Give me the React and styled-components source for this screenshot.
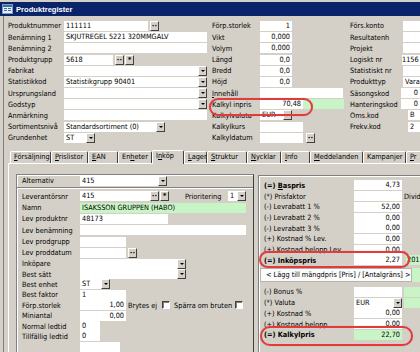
import React from 'react';
import styled, { createGlobalStyle } from 'styled-components';

const FACE = '#d4d0c8';
const GREEN = '#c9f5c6';

const GlobalStyle = createGlobalStyle`
  html, body { margin: 0; padding: 0; background: ${FACE}; }
  body {
    font-family: "DejaVu Sans Condensed", "Liberation Sans", sans-serif;
    font-size: 7.3px;
    color: #000;
  }
`;

const Window = styled.div`
  position: relative;
  width: 420px;
  height: 352px;
  overflow: hidden;
  display: flex;
  flex-direction: column;
  background: ${FACE};
`;

const TitleBar = styled.div`
  margin-top: 2px;
  height: 14px;
  display: flex;
  align-items: center;
  gap: 3px;
  padding-left: 2px;
  background: #0a246a;
  color: #fff;
  font: bold 7.6px "Liberation Sans", sans-serif;
`;

const Body = styled.div`
  flex: 1;
  min-height: 0;
  margin-left: 3px;
  border-left: 1px solid #808080;
  display: flex;
  flex-direction: column;
`;

const TopForm = styled.div`
  display: flex;
  padding: 4.4px 0 0 4px;
`;

const Column = styled.div`
  width: ${(p) => p.$w}px;
  flex-shrink: 0;
  display: flex;
  flex-direction: column;
`;

const Row = styled.div`
  display: flex;
  align-items: center;
  height: ${(p) => p.$h || 11.2}px;
  white-space: nowrap;
`;

const Label = styled.span`
  width: ${(p) => p.$w}px;
  flex-shrink: 0;
  font-weight: ${(p) => (p.$bold ? 'bold' : 'normal')};
  margin-left: ${(p) => p.$ml || 0}px;
`;

const Text = styled.span`
  margin-left: ${(p) => p.$ml || 0}px;
  flex-shrink: 0;
`;

const Field = styled.div`
  flex-shrink: 0;
  width: ${(p) => p.$w}px;
  height: 10px;
  line-height: 10px;
  box-sizing: border-box;
  padding: 0 ${(p) => (p.$tight ? 0 : 2)}px;
  margin-left: ${(p) => p.$ml || 0}px;
  background: ${(p) => (p.$green ? GREEN : '#fff')};
  text-align: ${(p) => (p.$right ? 'right' : 'left')};
  overflow: hidden;
  white-space: nowrap;
`;

const ComboBox = styled.div`
  flex-shrink: 0;
  display: flex;
  width: ${(p) => p.$w}px;
  height: 10px;
  margin-left: ${(p) => p.$ml || 0}px;
  background: #fff;
`;

const ComboText = styled.span`
  flex: 1;
  padding: 0 2px;
  line-height: 10px;
  overflow: hidden;
`;

const DropButton = styled.span`
  width: 9px;
  height: 10px;
  box-sizing: border-box;
  background: ${FACE};
  border: 1px solid;
  border-color: #fff #404040 #404040 #fff;
  display: flex;
  align-items: center;
  justify-content: center;
  &::after {
    content: '';
    border-left: 2px solid transparent;
    border-right: 2px solid transparent;
    border-top: 2px solid #000;
  }
`;

const ToolButton = styled.span`
  flex-shrink: 0;
  width: 9px;
  height: 10px;
  box-sizing: border-box;
  margin-left: ${(p) => p.$ml || 0}px;
  background: ${FACE};
  border: 1px solid;
  border-color: #fff #404040 #404040 #fff;
  display: flex;
  align-items: center;
  justify-content: center;
  font: bold 7px "DejaVu Sans", sans-serif;
  line-height: 6px;
`;

const CheckBox = styled.span`
  flex-shrink: 0;
  width: 8px;
  height: 8px;
  margin-left: ${(p) => p.$ml || 0}px;
  box-sizing: border-box;
  background: #fff;
  border: 1px solid;
  border-color: #404040 #fff #fff #404040;
  box-shadow: inset 1px 1px #808080;
`;

const TabStrip = styled.div`
  margin-top: 6.4px;
  height: 13px;
  padding-left: 6px;
  display: flex;
  align-items: flex-end;
`;

const Tab = styled.div`
  flex-shrink: 0;
  position: relative;
  width: ${(p) => p.$w}px;
  height: ${(p) => (p.$active ? 14 : 12)}px;
  margin-bottom: ${(p) => (p.$active ? -1 : 0)}px;
  z-index: ${(p) => (p.$active ? 1 : 0)};
  box-sizing: border-box;
  padding-left: 3px;
  border: 1px solid;
  border-color: #fff #404040 transparent #fff;
  border-bottom: none;
  border-radius: 2px 2px 0 0;
  background: ${FACE};
  line-height: 10px;
  white-space: nowrap;
  overflow: hidden;
`;

const TabPanel = styled.div`
  flex: 1;
  min-height: 0;
  margin-left: 4px;
  border-top: 1px solid #fff;
  border-left: 1px solid #fff;
  padding: 10px 0 0 7px;
  display: flex;
`;

const LeftBlock = styled.div`
  width: 238px;
  flex-shrink: 0;
  box-sizing: border-box;
  border-top: 1px solid #808080;
  border-left: 1px solid #808080;
  border-right: 1px solid #404040;
  box-shadow: inset 1px 1px #fff;
  display: flex;
  flex-direction: column;
`;

const AltSection = styled.div`
  height: 20px;
  padding-left: 5px;
  display: flex;
  align-items: center;
`;

const Divider = styled.div`
  border-top: 1px solid #808080;
  border-bottom: 1px solid #fff;
`;

const LevSection = styled.div`
  padding: 2px 0 0 5px;
  display: flex;
  flex-direction: column;
`;

const RightBlock = styled.div`
  flex: 1;
  margin: 1px 0 0 4px;
  border-top: 1px solid #808080;
  border-left: 1px solid #808080;
  box-shadow: inset 1px 1px #fff;
  padding: 4.3px 0 0 5px;
  display: flex;
  flex-direction: column;
`;

const PriceBand = styled.div`
  display: flex;
  align-items: center;
  margin: 2px 0 5px -4px;
  height: 14px;
`;

const BandText = styled.div`
  width: 152px;
  height: 14px;
  box-sizing: border-box;
  border: 1px solid #b8b4ac;
  background: #fbfbfb;
  padding-left: 5px;
  line-height: 12px;
  white-space: nowrap;
`;

const GreenCell = styled.div`
  flex-shrink: 0;
  width: ${(p) => p.$w}px;
  height: ${(p) => p.$h || 10}px;
  margin-left: ${(p) => p.$ml || 0}px;
  background: ${GREEN};
  line-height: 10px;
  padding-left: 1px;
  overflow: hidden;
`;

const Highlight = styled.div`
  position: absolute;
  left: ${(p) => p.$x}px;
  top: ${(p) => p.$y}px;
  width: ${(p) => p.$w}px;
  height: ${(p) => p.$h}px;
  box-sizing: border-box;
  border: 2px solid #e23b3b;
  border-radius: 10px;
  box-shadow: 0 0 1px rgba(120, 0, 0, 0.4);
  pointer-events: none;
`;

const Combo = ({ w, ml, children }) => (
  <ComboBox $w={w} $ml={ml}>
    <ComboText>{children}</ComboText>
    <DropButton />
  </ComboBox>
);

const Dots = ({ ml }) => <ToolButton $ml={ml}>··</ToolButton>;
const Star = ({ ml }) => <ToolButton $ml={ml}>*</ToolButton>;

const AppIcon = () => (
  <svg width="11" height="10" viewBox="0 0 11 10">
    <rect x="0.5" y="0.5" width="10" height="9" fill="#e8eef8" stroke="#7f9db9" />
    <rect x="1" y="1" width="9" height="2" fill="#3a6ea5" />
    <rect x="2" y="4" width="3" height="1" fill="#3a6ea5" />
    <rect x="6" y="4" width="3" height="1" fill="#3a6ea5" />
    <rect x="2" y="6" width="3" height="1" fill="#3a6ea5" />
    <rect x="6" y="6" width="3" height="1" fill="#3a6ea5" />
  </svg>
);

const tabs = [
  { label: 'Försäljning', u: 0, w: 41 },
  { label: 'Prislistor', u: 0, w: 37 },
  { label: 'EAN', u: 0, w: 30 },
  { label: 'Enheter', u: 2, w: 34 },
  { label: 'Inköp', u: 1, w: 32, active: true },
  { label: 'Lager', u: 0, w: 23 },
  { label: 'Struktur', u: 0, w: 40 },
  { label: 'Nycklar', u: 0, w: 34 },
  { label: 'Info', u: 0, w: 29 },
  { label: 'Meddelanden', u: 0, w: 53 },
  { label: 'Kampanjer', u: -1, w: 43 },
  { label: 'Pr', u: 0, w: 20 },
];

const Underlined = ({ text, at }) =>
  at < 0 ? (
    text
  ) : (
    <>
      {text.slice(0, at)}
      <u>{text[at]}</u>
      {text.slice(at + 1)}
    </>
  );

const App = () => (
  <Window>
    <GlobalStyle />
    <TitleBar>
      <AppIcon />
      Produktregister
    </TitleBar>
    <Body>
      <TopForm>
        <Column $w={204}>
          <Row>
            <Label $w={56}>Produktnummer</Label>
            <Field $w={84}>111111</Field>
            <Dots ml={2} />
          </Row>
          <Row>
            <Label $w={56}>Benämning 1</Label>
            <Field $w={143}>SKJUTREGEL 5221 320MMGALV</Field>
          </Row>
          <Row>
            <Label $w={56}>Benämning 2</Label>
            <Field $w={143} />
          </Row>
          <Row>
            <Label $w={56}>Produktgrupp</Label>
            <Field $w={49}>5618</Field>
            <Dots ml={2} />
            <Star ml={1} />
          </Row>
          <Row>
            <Label $w={56}>Fabrikat</Label>
            <Combo w={143} />
          </Row>
          <Row>
            <Label $w={56}>Statistikkod</Label>
            <Combo w={143}>Statistikgrupp 90401</Combo>
          </Row>
          <Row>
            <Label $w={56}>Ursprungsland</Label>
            <Combo w={143} />
          </Row>
          <Row>
            <Label $w={56}>Godstyp</Label>
            <Combo w={143} />
          </Row>
          <Row>
            <Label $w={56}>Anmärkning</Label>
            <Field $w={143} />
          </Row>
          <Row>
            <Label $w={56}>Sortimentsnivå</Label>
            <Combo w={101}>Standardsortiment (0)</Combo>
          </Row>
          <Row>
            <Label $w={56}>Grundenhet</Label>
            <Combo w={31}>ST</Combo>
          </Row>
        </Column>

        <Column $w={138}>
          <Row>
            <Label $w={48}>Förp.storlek</Label>
            <Field $w={32} $right>1</Field>
          </Row>
          <Row>
            <Label $w={48}>Vikt</Label>
            <Field $w={32} $right>0,000</Field>
          </Row>
          <Row>
            <Label $w={48}>Volym</Label>
            <Field $w={32} $right>0,000</Field>
          </Row>
          <Row>
            <Label $w={48}>Längd</Label>
            <Field $w={32} $right>0,0</Field>
          </Row>
          <Row>
            <Label $w={48}>Bredd</Label>
            <Field $w={32} $right>0,0</Field>
          </Row>
          <Row>
            <Label $w={48}>Höjd</Label>
            <Field $w={32} $right>0,0</Field>
          </Row>
          <Row>
            <Label $w={48}>
              <u>I</u>nnehåll
            </Label>
            <Field $w={83} />
          </Row>
          <Row>
            <Label $w={48}>Kalkyl inpris</Label>
            <Field $w={43} $right>70,48</Field>
            <GreenCell $w={40} />
          </Row>
          <Row>
            <Label $w={48}>Kalkylvaluta</Label>
            <Combo w={32}>EUR</Combo>
          </Row>
          <Row>
            <Label $w={48}>Kalkylkurs</Label>
            <Field $w={43} />
          </Row>
          <Row>
            <Label $w={48}>Kalkyldatum</Label>
            <Field $w={43} />
            <Dots ml={3} />
          </Row>
        </Column>

        <Column $w={74}>
          <Row>
            <Label $w={53}>Förs.konto</Label>
            <Field $w={20} />
          </Row>
          <Row>
            <Label $w={53}>Resultatenh</Label>
            <Field $w={20} />
          </Row>
          <Row>
            <Label $w={53}>Projekt</Label>
            <Field $w={20} />
          </Row>
          <Row>
            <Label $w={52}>Logiskt nr</Label>
            <Field $w={18} $tight>1156</Field>
          </Row>
          <Row>
            <Label $w={53}>Statistiskt nr</Label>
            <Field $w={20} />
          </Row>
          <Row>
            <Label $w={53}>Produkttyp</Label>
            <Field $w={20}>Vara</Field>
          </Row>
          <Row>
            <Label $w={51}>Säsongskod</Label>
            <Field $w={19} $right>0</Field>
          </Row>
          <Row>
            <Label $w={51}>Hanteringskod</Label>
            <Field $w={19} $right>0</Field>
          </Row>
          <Row>
            <Label $w={58}>Oms.kod</Label>
            <Field $w={12}>B</Field>
          </Row>
          <Row>
            <Label $w={58}>Frekv.kod</Label>
            <Field $w={12}>2</Field>
          </Row>
        </Column>
      </TopForm>

      <TabStrip>
        {tabs.map((t) => (
          <Tab key={t.label} $w={t.w} $active={t.active}>
            <Underlined text={t.label} at={t.u} />
          </Tab>
        ))}
      </TabStrip>

      <TabPanel>
        <LeftBlock>
          <AltSection>
            <Label $w={58}>Alternativ</Label>
            <Combo w={87}>415</Combo>
          </AltSection>
          <Divider />
          <LevSection>
            <Row $h={11.3}>
              <Label $w={58}>Leverantörsnr</Label>
              <Field $w={70}>415</Field>
              <Dots ml={0} />
              <Star ml={1} />
              <Label $w={43} $ml={16}>Prioritering</Label>
              <Combo w={18}>1</Combo>
            </Row>
            <Row $h={11.3}>
              <Label $w={58}>Namn</Label>
              <Field $w={166} $green>ISAKSSON GRUPPEN (HABO)</Field>
            </Row>
            <Row $h={11.3}>
              <Label $w={58}>Lev produktnr</Label>
              <Field $w={88}>48173</Field>
            </Row>
            <Row $h={11.3}>
              <Label $w={58}>Lev benämning</Label>
              <Field $w={166} />
            </Row>
            <Row $h={11.3}>
              <Label $w={58}>Lev prodgrupp</Label>
              <Field $w={46} />
            </Row>
            <Row $h={11.3}>
              <Label $w={58}>Lev proddatum</Label>
              <Field $w={46} />
              <Dots ml={2} />
            </Row>
            <Row $h={10.4}>
              <Label $w={58}>Inköpare</Label>
              <Combo w={106} />
            </Row>
            <Row $h={10.4}>
              <Label $w={58}>Best sätt</Label>
              <Combo w={106} />
            </Row>
            <Row $h={10.4}>
              <Label $w={58}>Best enhet</Label>
              <Combo w={30}>ST</Combo>
            </Row>
            <Row $h={10.4}>
              <Label $w={58}>Best faktor</Label>
              <Field $w={46}>1</Field>
            </Row>
            <Row $h={10.4}>
              <Label $w={58}>Förp.storlek</Label>
              <Field $w={46} $right>1,00</Field>
              <Text $ml={2}>Brytes ej</Text>
              <CheckBox $ml={5} />
              <Text $ml={4}>Spärra om bruten</Text>
              <CheckBox $ml={3} />
            </Row>
            <Row $h={10.4}>
              <Label $w={58}>Miniantal</Label>
              <Field $w={46} $right>0,00</Field>
            </Row>
            <Row $h={10.4}>
              <Label $w={58}>Normal ledtid</Label>
              <Field $w={20}>0</Field>
            </Row>
            <Row $h={10.4}>
              <Label $w={58}>Tillfällig ledtid</Label>
              <Field $w={20}>0</Field>
            </Row>
            <Row $h={10.4}>
              <Label $w={58} />
              <Field $w={40} />
            </Row>
          </LevSection>
        </LeftBlock>

        <RightBlock>
          <Row $h={10.7}>
            <Label $w={90} $bold>
              (=) <u>B</u>aspris
            </Label>
            <Field $w={48} $right>4,73</Field>
          </Row>
          <Row $h={10.7}>
            <Label $w={90}>(*) Prisfaktor</Label>
            <Field $w={48} />
            <Text $ml={2}>Divid</Text>
          </Row>
          <Row $h={10.7}>
            <Label $w={90}>(-) Levrabatt 1 %</Label>
            <Field $w={48} $right>52,00</Field>
          </Row>
          <Row $h={10.7}>
            <Label $w={90}>(-) Levrabatt 2 %</Label>
            <Field $w={48} $right>0,00</Field>
          </Row>
          <Row $h={10.7}>
            <Label $w={90}>(-) Levrabatt 3 %</Label>
            <Field $w={48} $right>0,00</Field>
          </Row>
          <Row $h={10.7}>
            <Label $w={90}>(+) Kostnad % Lev.</Label>
            <Field $w={48} $right>0,00</Field>
          </Row>
          <Row $h={10.7}>
            <Label $w={90}>(+) Kostnad belopp Lev.</Label>
            <Field $w={48} $right>0,00</Field>
          </Row>
          <Row $h={10.7}>
            <Label $w={90} $bold>(=) Inköpspris</Label>
            <Field $w={48} $right>2,27</Field>
            <GreenCell $w={14} $ml={4}>201</GreenCell>
          </Row>
          <PriceBand>
            <BandText>&lt; Lägg till mängdpris [Pris] / [Antalgräns] &gt;</BandText>
            <GreenCell $w={10} $h={14} />
          </PriceBand>
          <Row $h={10.7}>
            <Label $w={90}>(-) Bonus %</Label>
            <Field $w={48} />
            <GreenCell $w={20} $ml={2} />
          </Row>
          <Row $h={10.7}>
            <Label $w={90}>(*) Valuta</Label>
            <Combo w={48}>EUR</Combo>
            <GreenCell $w={20} $ml={2} />
          </Row>
          <Row $h={10.7}>
            <Label $w={90}>(+) Kostnad %</Label>
            <Field $w={48} $right>0,00</Field>
          </Row>
          <Row $h={10.7}>
            <Label $w={90}>(+) Kostnad belopp</Label>
            <Field $w={48} $right>0,00</Field>
          </Row>
          <Row $h={10.7}>
            <Label $w={90} $bold>(=) Kalkylpris</Label>
            <Field $w={48} $right $green>22,70</Field>
          </Row>
        </RightBlock>
      </TabPanel>
    </Body>

    <Highlight $x={209} $y={98} $w={104} $h={18} />
    <Highlight $x={259} $y={251} $w={151} $h={17} />
    <Highlight $x={260} $y={326} $w={153} $h={20} />
  </Window>
);

export default App;
